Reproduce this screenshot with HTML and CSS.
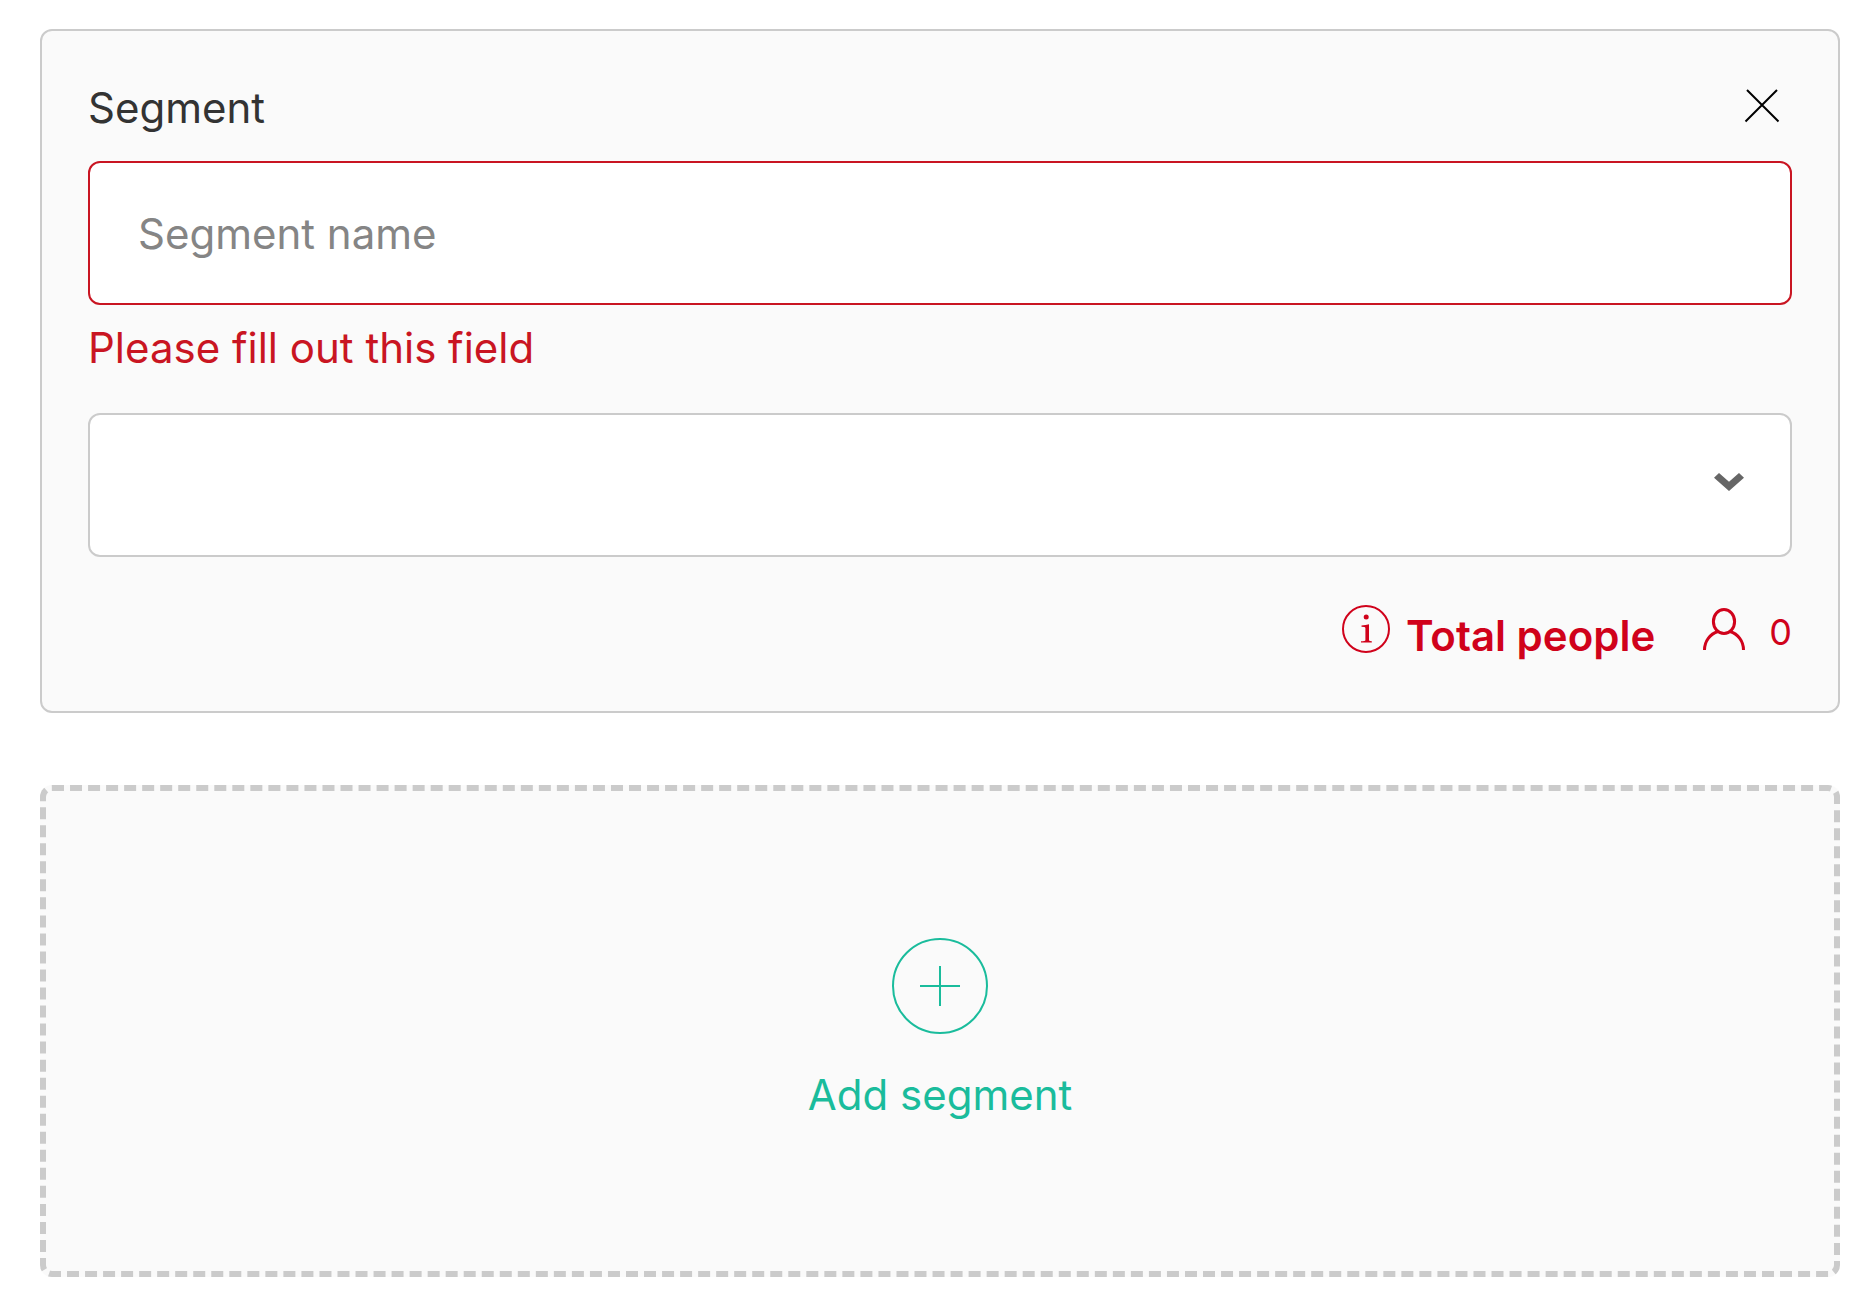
FILE: index.html
```html
<!DOCTYPE html>
<html lang="en">

<head>
  <meta charset="utf-8" />
  <title>Segments</title>
  <link rel="stylesheet" href="styles.css">
</head>

<body>
  <form class="segments" novalidate>
    <section class="segment">
      <div class="segment-header">
        <label for="segment-name">Segment</label>
        <button type="button" class="close" aria-label="Remove segment">
          <svg width="36" height="36" viewBox="0 0 36 36">
            <path d="M3 3L34.5 34.5M33 3L1.5 34.5" />
          </svg>
        </button>
      </div>
      <input class="field invalid" type="text" id="segment-name" placeholder="Segment name" aria-describedby="segment-error">
      <p class="error" id="segment-error">Please fill out this field</p>
      <div class="select">
        <select class="field" aria-label="Segment filter">
          <option value=""></option>
        </select>
        <svg class="chevron" width="30" height="18" viewBox="0 0 30 18">
          <path d="M0 4.7L5 0L15 8.8L25 0L30 4.7L15 18Z" />
        </svg>
      </div>
      <div class="totals">
        <svg class="info" width="48" height="48" viewBox="0 0 48 48">
          <circle cx="24" cy="24" r="23" />
          <circle class="dot" cx="24.2" cy="12" r="2.5" />
          <path class="glyph" d="M19.5 20.5Q24 20.3 27 19.3V35.2Q27.2 36.2 29.8 36.3V37.5H19V36.3Q23.2 36.2 23.4 35.2V23Q23.4 21.8 19.5 21.8Z" />
        </svg>
        <strong class="total-label">Total people</strong>
        <svg class="person" width="42" height="48" viewBox="0 0 42 48">
          <ellipse cx="21" cy="16.5" rx="10.6" ry="12" />
          <path d="M1.5 45C1.500 36 7 29 15 26.500M27 26.500C35 29 40.500 36 40.500 45" />
        </svg>
        <span class="count">0</span>
      </div>
    </section>

    <button type="button" class="add-segment">
      <svg width="96" height="96" viewBox="0 0 96 96">
        <circle cx="48" cy="48" r="47" />
        <path d="M28 48H68M48 28V68" />
      </svg>
      <span>Add segment</span>
    </button>
  </form>
</body>

</html>
```
FILE: styles.css
```css
* {
  box-sizing: border-box;
}

body {
  margin: 0;
  padding: 29px 26px 19px 40px;
  background-color: #fff;
  color: #333;
  font-family: Inter, "Liberation Sans", sans-serif;
  font-size: 42px;
  line-height: 62px;
}

button,
input,
select {
  font: inherit;
}

svg {
  display: block;
  flex: none;
  fill: none;
  stroke: currentColor;
  stroke-width: 2;
}

.segments {
  display: flex;
  flex-direction: column;
  gap: 72px;
}

.segment {
  padding: 46px;
  border: 2px solid #cbcbcb;
  border-radius: 12px;
  background-color: #fafafa;
}

.segment-header {
  display: flex;
  justify-content: space-between;
  align-items: flex-start;
  margin-bottom: 22px;
}

.close {
  padding: 10px 12px;
  border: 0;
  background: none;
  color: #000;
  cursor: pointer;
}

.field {
  display: block;
  width: 100%;
  height: 144px;
  padding: 0 48px;
  border: 2px solid #cbcbcb;
  border-radius: 12px;
  background-color: #fff;
  color: #333;
  appearance: none;
}

.field::placeholder {
  color: #858585;
  opacity: 1;
}

.invalid {
  border-color: #c91522;
}

.error {
  margin: 12px 0 34px;
  color: #c91522;
}

.select {
  position: relative;
}

/* drawn over the native select */
.chevron {
  position: absolute;
  top: 60px;
  right: 48px;
  fill: #666;
  stroke: none;
  pointer-events: none;
}

.totals {
  display: flex;
  justify-content: flex-end;
  align-items: flex-start;
  margin-top: 48px;
  margin-bottom: -2px;
  color: #d0021b;
}

.info .dot,
.info .glyph {
  fill: currentColor;
  stroke: none;
}

.total-label {
  margin: 0 48px 0 16px;
  font-weight: 600;
}

.person {
  stroke-width: 3;
}

.count {
  margin-left: 24px;
  font-size: 36px;
  line-height: 54px;
}

.add-segment {
  display: flex;
  flex-direction: column;
  align-items: center;
  gap: 30px;
  padding: 147px 0 145px;
  border: 6px dashed #cbcbcb;
  border-radius: 12px;
  background-color: #fafafa;
  color: #1abc9c;
  cursor: pointer;
}
```
